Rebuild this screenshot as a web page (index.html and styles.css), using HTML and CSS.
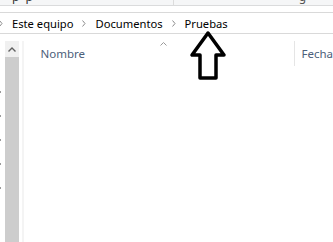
FILE: index.html
```html
<!DOCTYPE html>
<html lang="es">
<head>
<meta charset="utf-8">
<title>Pruebas</title>
<link rel="stylesheet" href="styles.css">
</head>
<body>
<div class="ribbon">
  <span class="frag f1">p</span>
  <span class="frag f2">p</span>
  <span class="rdiv"></span>
  <span class="frag f3">g</span>
</div>
<div class="gap-row"></div>
<div class="address">
  <svg class="sep first" width="4" height="7" viewBox="0 0 4 7"><polyline points="0.5,0.5 3,3.5 0.5,6.5" fill="none" stroke="#8a8a8a" stroke-width="1"/></svg>
  <span class="crumb">Este equipo</span>
  <svg class="sep" width="4" height="7" viewBox="0 0 4 7"><polyline points="0.5,0.5 3,3.5 0.5,6.5" fill="none" stroke="#8a8a8a" stroke-width="1"/></svg>
  <span class="crumb">Documentos</span>
  <svg class="sep" width="4" height="7" viewBox="0 0 4 7"><polyline points="0.5,0.5 3,3.5 0.5,6.5" fill="none" stroke="#8a8a8a" stroke-width="1"/></svg>
  <span class="crumb">Pruebas</span>
</div>
<div class="main">
  <div class="tree">
    <span class="dot"></span><span class="dot"></span><span class="dot"></span><span class="dot"></span><span class="dot"></span>
  </div>
  <div class="scrollbar">
    <div class="sbtn">
      <svg width="8" height="5" viewBox="0 0 8 5"><polyline points="0.5,4.5 4,1 7.5,4.5" fill="none" stroke="#606060" stroke-width="1.4"/></svg>
    </div>
    <div class="thumb"></div>
  </div>
  <div class="pane-edge"></div>
  <div class="content">
    <div class="header">
      <div class="col name">
        <span class="label">Nombre</span>
        <svg class="sort" width="7" height="4" viewBox="0 0 7 4"><polyline points="0.5,3.5 3.5,0.5 6.5,3.5" fill="none" stroke="#9a9a9a" stroke-width="1"/></svg>
      </div>
      <div class="col date"><span class="label">Fecha</span></div>
    </div>
  </div>
</div>
<svg class="pointer" width="44" height="54" viewBox="0 0 44 54">
  <polygon points="22,5 6,27 14,27 14,50 30,50 30,27 38,27" fill="#fff" stroke="#000" stroke-width="3.5" stroke-linejoin="round"/>
</svg>
</body>
</html>
```
FILE: styles.css
```css
html, body {
  margin: 0;
  padding: 0;
  background: #fff;
  width: 333px;
  height: 242px;
  overflow: hidden;
  font-family: "Noto Sans", "Open Sans", sans-serif;
}

.ribbon {
  height: 5px;
  background: #f5f6f7;
  border-bottom: 1px solid #dadbdc;
  overflow: hidden;
  display: flex;
  align-items: flex-start;
}

.frag {
  font-size: 12px;
  line-height: 12px;
  margin-top: -9px;
  color: #333;
}
.f1 { margin-left: 12px; }
.f2 { margin-left: 6px; }
.rdiv {
  width: 1px;
  height: 5px;
  background: #dcdcdc;
  margin-left: 140px;
}
.f3 { margin-left: 125px; color: #555; }

.gap-row {
  height: 6px;
  background: #fff;
  border-bottom: 1px solid #d9d9d9;
}

.address {
  height: 20px;
  border-bottom: 1px solid #d9d9d9;
  display: flex;
  align-items: center;
  font-size: 11.2px;
  color: #000;
}
.sep { flex: none; margin: 1px 9px 0 9px; }
.sep.first { margin-left: -1px; margin-right: 9px; }
.crumb { white-space: nowrap; }

.main {
  display: flex;
  height: 208px;
  padding-top: 7px;
  box-sizing: border-box;
}

.tree {
  width: 5px;
  display: flex;
  flex-direction: column;
  padding-top: 50px;
  gap: 22px;
}
.dot {
  width: 1px;
  height: 2px;
  background: #9a9a9a;
}

.scrollbar {
  width: 15px;
  display: flex;
  flex-direction: column;
  background: #f0f0f0;
}
.sbtn {
  height: 16px;
  display: flex;
  align-items: center;
  justify-content: center;
}
.thumb {
  flex: 1;
  background: #cdcdcd;
}
.pane-edge {
  width: 1px;
  margin-left: 0;
  background: #f0f0f0;
  border-right: 2px solid #fff;
  box-shadow: 3px 0 0 #f4f4f4;
}

.content { flex: 1; padding-left: 0; }
.header {
  display: flex;
  height: 25px;
  font-size: 11.5px;
  color: #4c607a;
}
.col { display: flex; align-items: center; position: relative; }
.name {
  width: 274px;
  padding-left: 19px;
  box-sizing: border-box;
  border-right: 1px solid #e5e5e5;
}
.sort { position: absolute; left: 139px; top: 1px; }
.date { padding-left: 6px; }

.pointer {
  position: absolute;
  left: 186px;
  top: 28px;
}
```
